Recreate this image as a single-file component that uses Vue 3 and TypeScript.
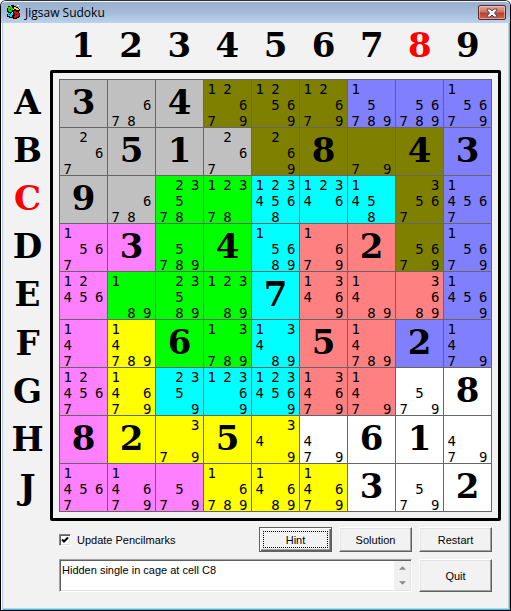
<script setup lang="ts">
import { computed, ref } from 'vue'

interface Cell {
  key: string
  cage: string
  solved: string
  marks: string[]
}

const columns = ['1', '2', '3', '4', '5', '6', '7', '8', '9']
const rows = ['A', 'B', 'C', 'D', 'E', 'F', 'G', 'H', 'J']

const cageNames: Record<string, string> = {
  k: 'gray',
  o: 'olive',
  b: 'blue',
  g: 'green',
  c: 'cyan',
  m: 'magenta',
  s: 'salmon',
  y: 'yellow',
  w: 'white',
}

const cages = [
  'kkkooobbb',
  'kkkkoooob',
  'kkggcccob',
  'mmggcssob',
  'mgggcsssb',
  'myggcssbb',
  'mycccssww',
  'myyyywwww',
  'mmmyyywww',
]

// "=n" is a solved digit, anything else lists the pencilmarks of the cell.
const puzzle = [
  '=3 678 =4 12679 12569 12679 15789 56789 15679',
  '267 =5 =1 267 269 =8 79 =4 =3',
  '=9 678 23578 12378 1234568 12346 1458 3567 14567',
  '1567 =3 5789 =4 15689 1679 =2 5679 15679',
  '12456 189 23589 12389 =7 13469 1489 3689 14569',
  '147 14789 =6 13789 13489 =5 14789 =2 1479',
  '124567 14679 2359 12369 1234569 134679 1479 579 =8',
  '=8 =2 379 =5 349 479 =6 =1 479',
  '14567 14679 579 16789 14689 14679 =3 579 =2',
]

const hintRow = ref('C')
const hintColumn = ref('8')
const updateMarks = ref(true)
const message = ref('Hidden single in cage at cell C8')

const cells = computed<Cell[]>(() =>
  puzzle.flatMap((line, r) =>
    line.split(' ').map((text, c) => ({
      key: rows[r] + columns[c],
      cage: cageNames[cages[r][c]],
      solved: text.startsWith('=') ? text.slice(1) : '',
      marks: columns.map((d) => (text.includes(d) ? d : '')),
    })),
  ),
)
</script>

<template>
  <div class="window">
    <header class="titlebar">
      <svg class="app-icon" viewBox="0 0 14 14" shape-rendering="crispEdges" aria-hidden="true">
        <path fill="#000" d="M1 1h3V0h3v1h2v1h2v1h2v3h-1v2h1v4h-1v1h-2v1H6v-1H2v-1H0V9h1V7H0V3h1z" />
        <path fill="#00e000" d="M1 2h2V1h2v2h1v2H5v2H2V6H1z" />
        <path fill="#ffe000" d="M7 2h2v1h2v1h1v1H9V4H7z" />
        <path fill="#00e0ff" d="M1 8h2v1h1V8h2v2H5v2H3v-1H1z" />
        <path fill="#ff0000" d="M7 6h2v1h2v1h1v3h-1v1H9v1H7v-2h1V8H7z" />
        <path fill="#fff" d="M10 0h2v1h-2zM5 7h1v1H5zM6 4h1v1H6zM12 3h1v1h-1z" />
        <path fill="#000" d="M3 4h1v1H3zM9 9h1v1H9zM2 9h1v1H2z" />
      </svg>
      <h1 class="title">Jigsaw Sudoku</h1>
      <button class="close" type="button" aria-label="Close">
        <svg viewBox="0 0 12 10" aria-hidden="true">
          <path
            d="M1 1h3l2 2 2-2h3v1L8.500 5 11 8v1H8L6 7 4 9H1V8l2.500-3L1 2z"
            fill="#f4f4f4"
            stroke="#4c4c5c"
            stroke-width="1"
          />
        </svg>
      </button>
    </header>

    <main class="content">
      <div class="column-labels">
        <span v-for="c in columns" :key="c" class="big" :class="{ hinted: c === hintColumn }">{{ c }}</span>
      </div>
      <div class="row-labels">
        <span v-for="r in rows" :key="r" class="big" :class="{ hinted: r === hintRow }">{{ r }}</span>
      </div>
      <div class="frame">
        <div class="board">
          <div v-for="cell in cells" :key="cell.key" class="cell" :class="cell.cage">
            <span v-if="cell.solved" class="big">{{ cell.solved }}</span>
            <div v-else class="marks">
              <span v-for="(m, i) in cell.marks" :key="i" class="mark">{{ m }}</span>
            </div>
          </div>
        </div>
      </div>

      <div class="controls">
        <label class="check">
          <input v-model="updateMarks" type="checkbox" />
          <span>Update Pencilmarks</span>
        </label>
        <button class="btn default" type="button"><span class="focus">Hint</span></button>
        <button class="btn" type="button">Solution</button>
        <button class="btn" type="button">Restart</button>
        <div class="message">
          <textarea v-model="message" aria-label="Message" readonly></textarea>
          <div class="scroll">
            <button type="button" aria-label="Scroll up">
              <svg viewBox="0 0 8 4" aria-hidden="true"><path d="M0 4L4 0l4 4z" fill="#8a8a8a" /></svg>
            </button>
            <button type="button" aria-label="Scroll down">
              <svg viewBox="0 0 8 4" aria-hidden="true"><path d="M0 0h8L4 4z" fill="#8a8a8a" /></svg>
            </button>
          </div>
        </div>
        <button class="btn" type="button">Quit</button>
      </div>
    </main>
  </div>
</template>

<style>
body {
  background: #fff;
}
</style>

<style scoped>
* {
  box-sizing: border-box;
}
.window {
  min-height: 100vh;
  display: flex;
  flex-direction: column;
  background: #f2f2f2;
  border: 1px solid #000;
  border-top-color: #2c2c34;
  border-radius: 6px 6px 0 0;
  box-shadow: inset 1px 0 #fff, inset 2px 0 #b4d0f0, inset -1px -1px #30c4e8, inset -2px -2px #b4d4e8;
  font-family: 'Liberation Sans', Arial, sans-serif;
  font-size: 11px;
  color: #000;
}
.titlebar {
  display: flex;
  align-items: flex-start;
  height: 22px;
  padding: 3px 4px 0 6px;
  border-top: 1px solid #f4f8fc;
  border-radius: 5px 5px 0 0;
  background: linear-gradient(#98b0ce, #a4bcda 50%, #bcd2ea);
}
.app-icon {
  width: 14px;
  height: 14px;
}
.title {
  flex: 1;
  margin: 0 0 0 4px;
  font: 12px/16px 'Open Sans', 'Segoe UI', sans-serif;
}
.close {
  display: flex;
  align-items: center;
  justify-content: center;
  width: 28px;
  height: 15px;
  padding: 0;
  border: 1px solid #5a2430;
  border-radius: 2px;
  background: linear-gradient(#e4a698, #cf7262 48%, #b83c28 52%, #cc6850);
  box-shadow: inset 0 0 0 1px rgba(255, 220, 210, 0.5);
}
.close svg {
  width: 12px;
  height: 10px;
}
.content {
  display: grid;
  grid-template-columns: 41px 1fr;
  padding: 0 9px 0 8px;
}
.big {
  display: flex;
  align-items: center;
  justify-content: center;
  font: bold 34px/44px 'DejaVu Serif', 'Bookman Old Style', serif;
}
.hinted {
  color: #f00;
}
.column-labels {
  grid-column: 2;
  display: grid;
  grid-template-columns: repeat(9, 1fr);
  height: 47px;
  padding: 0 9px 3px;
}
.row-labels {
  display: grid;
  grid-template-rows: repeat(9, 1fr);
  padding: 8px 4px 10px 0;
}
.frame {
  padding: 6px;
  border: 3px solid #000;
  border-radius: 2px;
}
.board {
  display: grid;
  grid-template-columns: repeat(9, 1fr);
  gap: 1px;
  border: 1px solid #666;
  background: #666;
}
.cell {
  height: 47px;
}
.marks {
  display: grid;
  grid-template-columns: repeat(3, 1fr);
  grid-template-rows: repeat(3, 16px);
  height: 47px;
}
.mark {
  text-align: center;
  font: 14px/18px 'DejaVu Sans Mono', 'Lucida Console', monospace;
}
.gray { background: #c0c0c0; }
.olive { background: #808000; }
.blue { background: #8080ff; }
.green { background: #00ff00; }
.cyan { background: #00ffff; }
.magenta { background: #ff80ff; }
.salmon { background: #ff8080; }
.yellow { background: #ffff00; }
.white { background: #ffffff; }

.controls {
  grid-column: 2;
  display: grid;
  grid-template-columns: 1fr 73px 73px 73px;
  grid-template-rows: 25px 33px;
  gap: 7px;
  padding: 6px 9px 16px;
}
.check {
  display: flex;
  align-items: center;
  gap: 6px;
}
.check input {
  appearance: none;
  width: 12px;
  height: 12px;
  margin: 0;
  border: 1px solid;
  border-color: #808080 #fff #fff #808080;
  background: #fff;
  box-shadow: inset 1px 1px #606060, inset -1px -1px #e0e0e0;
}
.check input:checked {
  background: #fff
    url("data:image/svg+xml,%3Csvg xmlns='http://www.w3.org/2000/svg' viewBox='0 0 10 10'%3E%3Cpath d='M2 4.500L4 6.500L8 2.500' fill='none' stroke='black' stroke-width='2'/%3E%3C/svg%3E")
    center / 10px 10px no-repeat;
}
.btn {
  display: flex;
  align-items: center;
  justify-content: center;
  padding: 0;
  border: 1px solid;
  border-color: #fff #606060 #606060 #fff;
  background: #f2f2f2;
  box-shadow: inset -1px -1px #a0a0a0, inset 1px 1px #e3e3e3;
  font: inherit;
  color: inherit;
}
.default {
  padding: 2px;
  border-color: #606060;
  box-shadow: inset 1px 1px #fff, inset -1px -1px #606060, inset -2px -2px #a0a0a0;
}
.focus {
  flex: 1;
  align-self: stretch;
  display: flex;
  align-items: center;
  justify-content: center;
  margin: 1px;
  border: 1px dotted #000;
}
.message {
  grid-column: 1 / 4;
  display: flex;
  border: 1px solid;
  border-color: #a0a0a0 #fff #fff #a0a0a0;
  box-shadow: inset 1px 1px #606060, inset -1px -1px #e3e3e3;
  background: #fff;
  padding: 1px;
}
.message textarea {
  flex: 1;
  min-width: 0;
  height: 28px;
  padding: 2px 1px;
  border: 0;
  outline: 0;
  resize: none;
  overflow: hidden;
  background: transparent;
  font: inherit;
  line-height: 14px;
  color: inherit;
}
.scroll {
  display: flex;
  flex-direction: column;
  width: 16px;
  background: #f0f0f0;
}
.scroll button {
  flex: 1;
  display: flex;
  align-items: center;
  justify-content: center;
  padding: 0;
  border: 0;
  background: transparent;
}
.scroll svg {
  width: 7px;
  height: 4px;
}
</style>
